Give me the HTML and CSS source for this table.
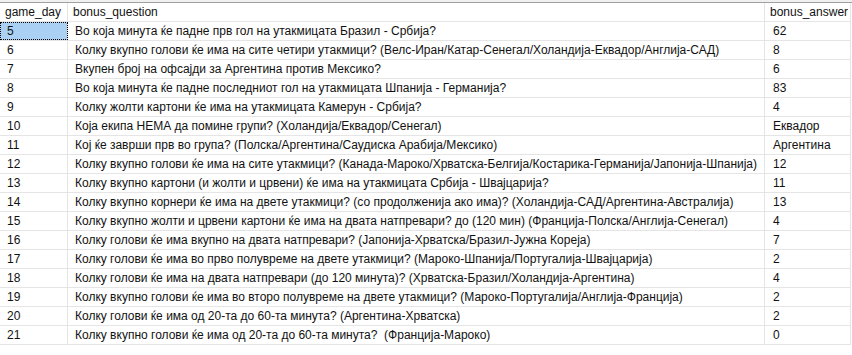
FILE: index.html
```html
<!DOCTYPE html>
<html>
<head>
<meta charset="utf-8">
<link rel="stylesheet" href="styles.css">
</head>
<body>
<div class="topstrip"></div>
<div class="grid">
  <div class="row head"><div class="c c1">game_day</div><div class="c c2">bonus_question</div><div class="c c3">bonus_answer</div></div>
  <div class="row"><div class="c c1 sel">5</div><div class="c c2">Во која минута ќе падне прв гол на утакмицата Бразил - Србија?</div><div class="c c3">62</div></div>
  <div class="row"><div class="c c1">6</div><div class="c c2">Колку вкупно голови ќе има на сите четири утакмици? (Велс-Иран/Катар-Сенегал/Холандија-Еквадор/Англија-САД)</div><div class="c c3">8</div></div>
  <div class="row"><div class="c c1">7</div><div class="c c2">Вкупен број на офсајди за Аргентина против Мексико?</div><div class="c c3">6</div></div>
  <div class="row"><div class="c c1">8</div><div class="c c2">Во која минута ќе падне последниот гол на утакмицата Шпанија - Германија?</div><div class="c c3">83</div></div>
  <div class="row"><div class="c c1">9</div><div class="c c2">Колку жолти картони ќе има на утакмицата Камерун - Србија?</div><div class="c c3">4</div></div>
  <div class="row"><div class="c c1">10</div><div class="c c2">Која екипа НЕМА да помине групи? (Холандија/Еквадор/Сенегал)</div><div class="c c3">Еквадор</div></div>
  <div class="row"><div class="c c1">11</div><div class="c c2">Кој ќе заврши прв во група? (Полска/Аргентина/Саудиска Арабија/Мексико)</div><div class="c c3">Аргентина</div></div>
  <div class="row"><div class="c c1">12</div><div class="c c2">Колку вкупно голови ќе има на сите утакмици? (Канада-Мароко/Хрватска-Белгија/Костарика-Германија/Јапонија-Шпанија)</div><div class="c c3">12</div></div>
  <div class="row"><div class="c c1">13</div><div class="c c2">Колку вкупно картони (и жолти и црвени) ќе има на утакмицата Србија - Швајцарија?</div><div class="c c3">11</div></div>
  <div class="row"><div class="c c1">14</div><div class="c c2">Колку вкупно корнери ќе има на двете утакмици? (со продолженија ако има)? (Холандија-САД/Аргентина-Австралија)</div><div class="c c3">13</div></div>
  <div class="row"><div class="c c1">15</div><div class="c c2">Колку вкупно жолти и црвени картони ќе има на двата натпревари? до (120 мин) (Франција-Полска/Англија-Сенегал)</div><div class="c c3">4</div></div>
  <div class="row"><div class="c c1">16</div><div class="c c2">Колку голови ќе има вкупно на двата натпревари? (Јапонија-Хрватска/Бразил-Јужна Кореја)</div><div class="c c3">7</div></div>
  <div class="row"><div class="c c1">17</div><div class="c c2">Колку голови ќе има во прво полувреме на двете утакмици? (Мароко-Шпанија/Португалија-Швајцарија)</div><div class="c c3">2</div></div>
  <div class="row"><div class="c c1">18</div><div class="c c2">Колку голови ќе има на двата натпревари (до 120 минута)? (Хрватска-Бразил/Холандија-Аргентина)</div><div class="c c3">4</div></div>
  <div class="row"><div class="c c1">19</div><div class="c c2">Колку вкупно голови ќе има во второ полувреме на двете утакмици? (Мароко-Португалија/Англија-Франција)</div><div class="c c3">2</div></div>
  <div class="row"><div class="c c1">20</div><div class="c c2">Колку голови ќе има од 20-та до 60-та минута? (Аргентина-Хрватска)</div><div class="c c3">2</div></div>
  <div class="row"><div class="c c1">21</div><div class="c c2">Колку вкупно голови ќе има од 20-та до 60-та минута?&nbsp; (Франција-Мароко)</div><div class="c c3">0</div></div>
</div>
</body>
</html>
```

FILE: styles.css
```css
html, body {
  margin: 0;
  padding: 0;
  background: #ffffff;
}
body {
  font-family: "Liberation Sans", Arial, sans-serif;
  font-size: 12px;
  color: #111111;
}
.topstrip {
  height: 2px;
  background: #f0f0f0;
  border-bottom: 1px solid #a0a0a0;
}
.grid {
  width: 851px;
}
.row {
  display: grid;
  grid-template-columns: 68px 697px 86px;
  height: 19px;
  box-sizing: border-box;
  border-bottom: 1px solid #e5e5e5;
}
.c {
  box-sizing: border-box;
  border-right: 1px solid #e5e5e5;
  padding-left: 7px;
  padding-top: 1px;
  line-height: 17px;
  white-space: pre;
  overflow: hidden;
}
.head .c {
  padding-left: 5px;
  padding-top: 0;
  line-height: 18px;
  background: #ffffff;
}
.head .c3 {
  padding-left: 5px;
}
.c3 {
  padding-left: 8px;
}
.sel {
  background: #aad1f3;
  outline: 1px dotted #000000;
  outline-offset: -1px;
}
```
